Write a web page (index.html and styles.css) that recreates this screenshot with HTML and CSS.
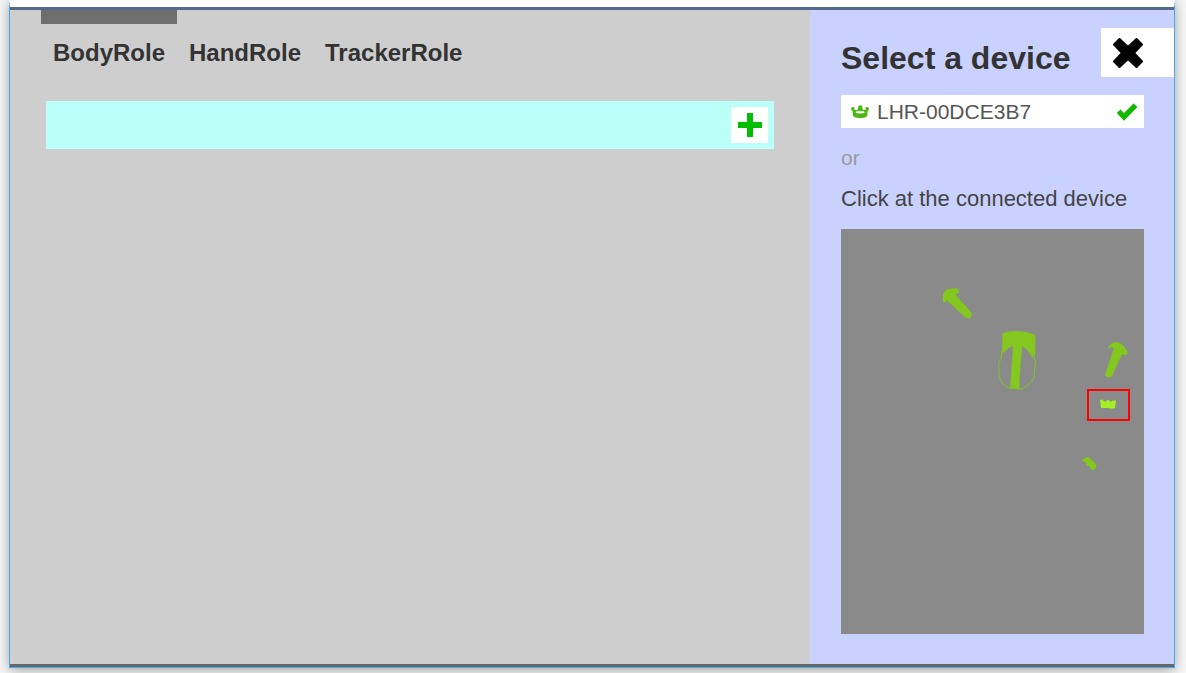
FILE: index.html
```html
<!DOCTYPE html>
<html lang="en">
<head>
<meta charset="utf-8">
<title>Device binding</title>
<link rel="stylesheet" href="styles.css">
</head>
<body>
<div class="window">
  <main class="roles">
    <nav class="tabs">
      <button class="tab tab-active" type="button">BodyRole</button>
      <button class="tab" type="button">HandRole</button>
      <button class="tab" type="button">TrackerRole</button>
    </nav>
    <div class="binding-row">
      <button class="add" type="button" aria-label="Add binding">
        <svg width="24" height="24" viewBox="0 0 24 24"><path d="M9 0h6v9H24v6h-9V24h-6v-9H0v-6h9z" fill="#00bf00"/></svg>
      </button>
    </div>
  </main>
  <aside class="panel">
    <header class="panel-head">
      <h1 class="title">Select a device</h1>
      <button class="close" type="button" aria-label="Close">
        <svg width="32" height="32" viewBox="0 0 32 32"><path d="M7.500 2L16 10L24.500 2L30 7.500L22 16L30 24.500L24.500 30L16 22L7.500 30L2 24.500L10 16L2 7.500Z" fill="#000" stroke="#000" stroke-width="2" stroke-linejoin="round"/></svg>
      </button>
    </header>
    <div class="panel-body">
      <button class="device" type="button">
        <svg width="20" height="16" viewBox="0 0 20 16"><path fill="#4cba16" fill-rule="evenodd" d="M1 4Q3 2.500 4.500 3.500L4.500 6H7.500L8 4L8.500 1.500H12L12.500 4L13 6H15.500V3.500Q17 2.500 19 4Q19.300 6 17.500 7.500L17.300 11.500C16.500 15 4 15 3 11.500L2.700 7.500Q.7 6 1 4ZM6.500 7.300L5.700 9Q10 9.800 14.700 9L13.800 7.300Z"/></svg>
        <span class="device-name">LHR-00DCE3B7</span>
        <svg width="22" height="20" viewBox="0 0 22 20"><path fill="#12b900" d="M.8 11L4.500 7.500L8 11L17.500 1.500L21.500 5L8 18.800Z"/></svg>
      </button>
      <p class="or">or</p>
      <p class="hint">Click at the connected device</p>
      <div class="map">
        <svg class="map-art" width="303" height="405" viewBox="0 0 303 405">
          <g fill="#83c71f">
            <path d="M102 73Q101 65 104 62Q108 58 117 60Q119 62 118 64L115 64.500L115.500 67L130 83Q132 87 129 89Q126 90.500 122.500 87L109 74L106 71L104 74Z"/>
            <path d="M161.500 104Q177 99 194.500 106L194 125L191 129Q188 121 181 117.500L178.500 152V160H169L172 117Q166 119 163 124L161 123Z"/>
            <path d="M268 120L267 118Q271 113 276 113Q284 115 287 125L285 126L281 125.500L271 147Q268 150 264.500 147V144L273 119L270 118Z"/>
            <path d="M241 230.500L247 227.500L255.500 235.500L255 238L252.500 241.500L249 239.500L249 237.500L246.500 237L244.500 235L245 233L242.500 233Z"/>
          </g>
          <path d="M161 122L160 130Q156 134 158 140L158 149Q162 157 168 159L181 160Q189 156 193 149L194 137Q196 133 193 129L194 120" fill="none" stroke="#83c71f"/>
          <path d="M259 171L261.500 170.500L263 172.500H265L266 171H268L269 172.500H271L271.500 171.500H275L274 179Q271 180 267 179H260Z" fill="#a4ef26"/>
        </svg>
        <button class="pick" type="button" aria-label="LHR-00DCE3B7"></button>
      </div>
    </div>
  </aside>
</div>
</body>
</html>
```
FILE: styles.css
```css
* { box-sizing: border-box; }

body {
  margin: 0;
  background: #f7f7f7;
  font-family: "Liberation Sans", Arial, sans-serif;
  color: #333;
}

button {
  border: 0;
  padding: 0;
  font: inherit;
  color: inherit;
  cursor: pointer;
}

svg { display: block; }

.window {
  display: flex;
  min-height: calc(100vh - 5px);
  margin: 0 11px 5px 9px;
  border: 1px solid #3fa9f5;
  border-top: 7px solid #fff;
  box-shadow: 0 2px 12px rgba(0, 0, 0, 0.35);
}

.roles,
.panel {
  border-top: 3px solid #536a8e;
  border-bottom: 3px solid #666;
}

.roles {
  flex: 1;
  background: #cecece;
}

.tabs {
  display: flex;
  padding-left: 31px;
}

.tab {
  padding: 29px 12px 0;
  background: none;
  font-size: 24px;
  font-weight: bold;
  line-height: 28px;
}

.tab-active { box-shadow: inset 0 14px #6e6e6e; }

.binding-row {
  display: flex;
  justify-content: flex-end;
  margin: 34px 36px 0;
  padding: 6px;
  background: #bafff8;
}

.add {
  display: grid;
  place-items: center;
  width: 37px;
  height: 36px;
  background: #fff;
}

.panel {
  display: flex;
  flex: 0 0 364px;
  flex-direction: column;
  background: #c9d1ff;
}

.panel-head {
  display: flex;
  justify-content: space-between;
  padding: 18px 0 18px 31px;
}

.title {
  margin: 0;
  padding-top: 12px;
  font-size: 32px;
  line-height: 37px;
}

.close {
  width: 73px;
  height: 49px;
  padding-left: 11px;
  background: #fff;
}

.panel-body {
  display: flex;
  flex: 1;
  flex-direction: column;
  padding: 0 30px 30px 31px;
}

.device {
  display: flex;
  align-items: center;
  height: 33px;
  padding: 0 6px 0 9px;
  background: #fff;
  color: #555;
  font-size: 21px;
}

.device-name {
  flex: 1;
  padding-left: 7px;
  text-align: left;
}

.or,
.hint {
  margin: 0;
  line-height: 24px;
}

.or {
  padding-top: 18px;
  color: #999;
  font-size: 21px;
}

.hint {
  padding: 17px 0 18px;
  color: #444;
  font-size: 22px;
  white-space: nowrap;
}

.map {
  position: relative;
  flex: 1;
  background: #8a8a8a;
}

.pick {
  position: absolute;
  top: 160px;
  left: 246px;
  width: 43px;
  height: 32px;
  border: 2px solid #f00;
  background: none;
}
```
